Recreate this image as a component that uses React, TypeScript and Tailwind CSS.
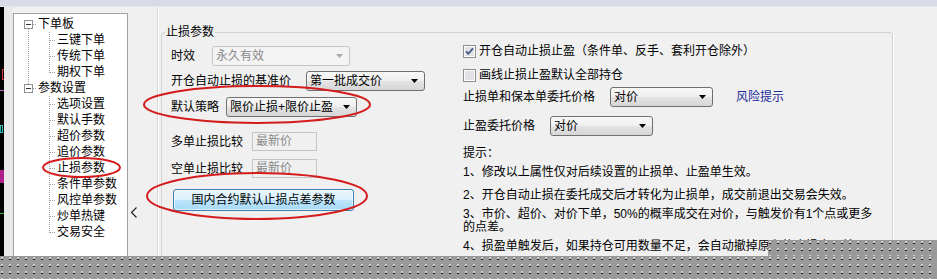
import React from "react";

const treeItems: { label: string; top?: boolean }[] = [
  { label: "下单板", top: true },
  { label: "三键下单" },
  { label: "传统下单" },
  { label: "期权下单" },
  { label: "参数设置", top: true },
  { label: "选项设置" },
  { label: "默认手数" },
  { label: "超价参数" },
  { label: "追价参数" },
  { label: "止损参数" },
  { label: "条件单参数" },
  { label: "风控单参数" },
  { label: "炒单热键" },
  { label: "交易安全" },
];

const Arrow = ({ color }: { color: string }) => (
  <svg width="7" height="4" viewBox="0 0 7 4" className="shrink-0">
    <path d="M0 0H7L3.5 4Z" fill={color} />
  </svg>
);

const Combo = ({
  text,
  className,
  disabled,
}: {
  text: string;
  className: string;
  disabled?: boolean;
}) => (
  <div
    className={`flex h-[20px] shrink-0 items-center justify-between rounded-[3px] border pl-[3px] pr-[6px] ${
      disabled
        ? "border-[#c5c5c5] bg-[#f4f4f4] text-[#8a8a8a]"
        : "border-[#707070] bg-[linear-gradient(#f8f8f8,#efefef_50%,#e4e4e4_50%,#d6d6d6)] text-black"
    } ${className}`}
  >
    <span className="leading-4">{text}</span>
    <Arrow color={disabled ? "#a8a8a8" : "#000"} />
  </div>
);

const Check = ({ checked }: { checked?: boolean }) => (
  <svg width="13" height="13" viewBox="0 0 13 13" className="shrink-0">
    <rect x="0.5" y="0.5" width="12" height="12" fill="#fdfdfd" stroke="#8e8f8f" />
    <rect x="2" y="2" width="9" height="9" fill="#dfe1e5" />
    {checked && (
      <path d="M3 6.3L5.3 8.8L10 3.4" fill="none" stroke="#3f5583" strokeWidth="1.7" />
    )}
  </svg>
);

const TreeLines = () => {
  const dot = { stroke: "#a0a0a0", strokeDasharray: "1 1", shapeRendering: "crispEdges" as const };
  const kids2 = [0, 1, 2, 3, 4, 5, 6, 7, 8];
  return (
    <svg className="absolute left-0 top-0" width="113" height="240" viewBox="0 0 113 240">
      {/* root connector */}
      <line x1="14.5" y1="15" x2="14.5" y2="70" {...dot} />
      <line x1="19" y1="10.5" x2="23" y2="10.5" {...dot} />
      <line x1="19" y1="74.5" x2="23" y2="74.5" {...dot} />
      {/* first group */}
      <line x1="35.5" y1="18" x2="35.5" y2="59" {...dot} />
      {[26.5, 42.5, 58.5].map((y) => (
        <line key={y} x1="36" y1={y} x2="42" y2={y} {...dot} />
      ))}
      {/* second group */}
      <line x1="35.5" y1="82" x2="35.5" y2="219" {...dot} />
      {kids2.map((k) => (
        <line key={k} x1="36" y1={90.5 + k * 16} x2="42" y2={90.5 + k * 16} {...dot} />
      ))}
      {[6.5, 70.5].map((y) => (
        <g key={y}>
          <rect x="10.5" y={y} width="8" height="8" fill="#fff" stroke="#919191" shapeRendering="crispEdges" />
          <line x1="12" y1={y + 4} x2="17" y2={y + 4} stroke="#333" shapeRendering="crispEdges" />
        </g>
      ))}
    </svg>
  );
};

// leftover of the chart window behind the dialog
const ChartStrip = () => (
  <svg width="4" height="249" viewBox="0 0 4 249" className="shrink-0">
    <rect width="4" height="249" fill="#000" />
    <rect x="2" y="62" width="2" height="1" fill="#e03232" />
    <rect x="2" y="62" width="1" height="11" fill="#e03232" />
    <rect x="2" y="72" width="2" height="1" fill="#e03232" />
    <rect x="0" y="83" width="4" height="1" fill="#c060c0" />
    <rect x="0.5" y="118.5" width="2" height="7" fill="none" stroke="#30c0c0" />
    <rect x="0" y="163" width="4" height="13" fill="#b0208a" />
    <rect x="0" y="206" width="4" height="1" fill="#40b040" />
  </svg>
);

const dotted =
  "bg-[#9a9a9a] bg-[radial-gradient(circle_at_2px_2px,#f4f4f4_0.55px,transparent_0.9px),radial-gradient(circle_at_2px_3.5px,#1a1a1a_0.55px,transparent_0.9px)] bg-size-[8px_7px]";

export default function App() {
  return (
    <div className="relative h-[279px] w-[937px] overflow-hidden bg-[#f0f0f0] text-[12px] text-black font-['Liberation_Sans','Noto_Sans_CJK_SC',sans-serif]">
      <div className="h-[7px] border-b border-[#e6e7ef] bg-[#d8dae6]" />

      <div className="flex h-[249px]">
        <ChartStrip />
        <div className="w-[9px] shrink-0 bg-[#e9e9e9]" />

        {/* tree */}
        <div className="relative mt-[6px] w-[115px] shrink-0 border-l border-r border-t border-[#a0a0a0] bg-white pt-[2px]">
          <TreeLines />
          {treeItems.map((it) => (
            <div
              key={it.label}
              className={`relative flex h-4 items-center leading-4 ${it.top ? "pl-[24px]" : "pl-[43px]"}`}
            >
              {it.label}
            </div>
          ))}
        </div>

        {/* splitter */}
        <div className="w-[30px] shrink-0 border-r border-[#d8d8d8] pl-[2px] pt-[200px]">
          <svg width="8" height="11" viewBox="0 0 8 11">
            <polyline points="6.5,0.5 1.5,5.5 6.5,10.5" fill="none" stroke="#222" strokeWidth="1.2" />
          </svg>
        </div>

        {/* settings */}
        <div className="flex-1 overflow-hidden border-l border-white">
          <fieldset className="ml-[2px] mt-[17px] h-[260px] w-[732px] rounded-[3px] border border-[#d3d3d3] shadow-[1px_1px_0_#ffffff]">
            <legend className="ml-[3px] px-[1px] leading-4">止损参数</legend>
            <div className="flex pl-[9px]">
              <div className="flex w-[292px] shrink-0 flex-col pt-[6px]">
                <div className="flex h-[20px] items-center">
                  <span className="w-[41px] shrink-0">时效</span>
                  <Combo text="永久有效" className="w-[138px]" disabled />
                </div>
                <div className="mt-[5px] flex h-[20px] items-center">
                  <span className="w-[135px] shrink-0">开仓自动止损的基准价</span>
                  <Combo text="第一批成交价" className="w-[119px]" />
                </div>
                <div className="mt-[6px] flex h-[20px] items-center">
                  <span className="w-[55px] shrink-0">默认策略</span>
                  <Combo text="限价止损+限价止盈" className="w-[131px]" />
                </div>
                <div className="mt-[15px] flex h-[19px] items-center">
                  <span className="w-[81px] shrink-0">多单止损比较</span>
                  <div className="h-[19px] w-[65px] border border-[#c4c4c4] bg-[#f0f0f0] pl-[3px] leading-[17px] text-[#8a8a8a]">
                    最新价
                  </div>
                </div>
                <div className="mt-[8px] flex h-[19px] items-center">
                  <span className="w-[81px] shrink-0">空单止损比较</span>
                  <div className="h-[19px] w-[65px] border border-[#c4c4c4] bg-[#f0f0f0] pl-[3px] leading-[17px] text-[#8a8a8a]">
                    最新价
                  </div>
                </div>
                <button className="ml-[2px] mt-[11px] h-[22px] w-[181px] rounded-[3px] border border-[#3c7fb1] bg-[linear-gradient(#eaf6fd,#d9f0fc_50%,#bee6fd_50%,#a7d9f5)] text-center leading-4 text-black shadow-[inset_0_0_0_1px_#ffffff99]">
                  国内合约默认止损点差参数
                </button>
              </div>

              <div className="flex flex-1 flex-col pt-[3px]">
                <div className="flex h-4 items-center gap-[3px]">
                  <Check checked />
                  <span className="leading-4">开仓自动止损止盈（条件单、反手、套利开仓除外）</span>
                </div>
                <div className="mt-[8px] flex h-4 items-center gap-[3px]">
                  <Check />
                  <span className="leading-4">画线止损止盈默认全部持仓</span>
                </div>
                <div className="mt-[4px] flex h-[20px] items-center">
                  <span className="w-[147px] shrink-0">止损单和保本单委托价格</span>
                  <Combo text="对价" className="w-[103px]" />
                  <span className="ml-[23px] text-[#1e2a9c]">风险提示</span>
                </div>
                <div className="mt-[9px] flex h-[20px] items-center">
                  <span className="w-[87px] shrink-0">止盈委托价格</span>
                  <Combo text="对价" className="w-[103px]" />
                </div>
                <p className="mt-[9px] leading-4">提示：</p>
                <p className="mt-[3px] leading-4">1、修改以上属性仅对后续设置的止损单、止盈单生效。</p>
                <p className="mt-[7px] leading-4">2、开仓自动止损在委托成交后才转化为止损单，成交前退出交易会失效。</p>
                <p className="mt-[5px] leading-[13px]">
                  3、市价、超价、对价下单，50%的概率成交在对价，与触发价有1个点或更多
                  <br />
                  的点差。
                </p>
                <p className="mt-[4px] whitespace-nowrap leading-4">
                  4、损盈单触发后，如果持仓可用数量不足，会自动撤掉原有的止损止盈单。
                </p>
              </div>
            </div>
          </fieldset>
        </div>
      </div>

      {/* hand-drawn marks */}
      <svg className="pointer-events-none absolute left-0 top-0" width="937" height="279" viewBox="0 0 937 279">
        <g fill="none" stroke="#d41c1c" strokeWidth="2">
          <ellipse cx="81.5" cy="167.5" rx="38.5" ry="9.5" />
          <ellipse cx="257" cy="104.5" rx="113" ry="18.5" />
          <ellipse cx="257" cy="196" rx="110" ry="23" />
        </g>
      </svg>

      {/* screenshot cut-off area */}
      <div className={`absolute left-[768px] top-[240px] h-[16px] w-[169px] ${dotted}`} />
      <div className={`absolute left-0 top-[256px] h-[23px] w-full ${dotted}`} />
    </div>
  );
}
